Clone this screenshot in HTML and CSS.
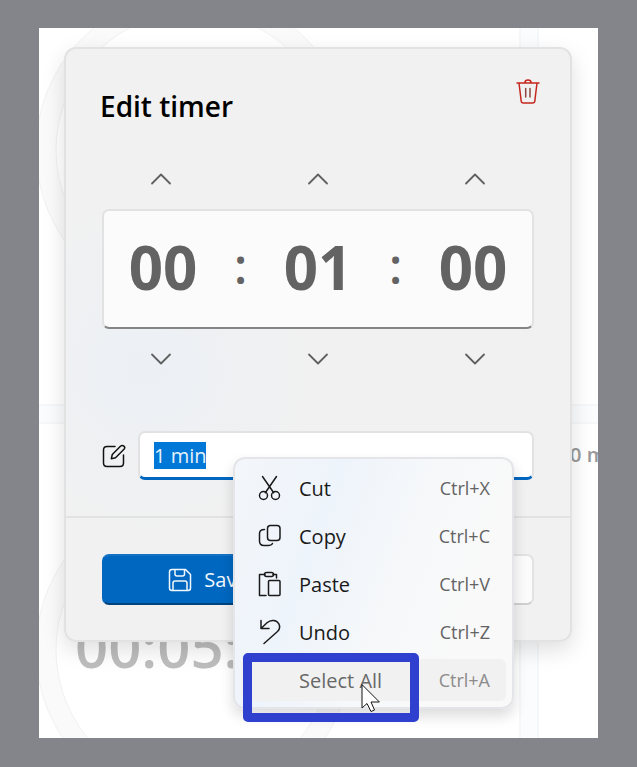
FILE: index.html
```html
<!DOCTYPE html>
<html lang="en">
<head>
<meta charset="utf-8">
<title>Edit timer</title>
<link rel="stylesheet" href="styles.css">
</head>
<body>
<main class="stage">
  <div class="backdrop" aria-hidden="true">
    <section class="tile">
      <svg class="ring" viewBox="0 0 320 320"><circle class="ring-band" cx="160" cy="160" r="148"/><circle class="ring-edge" cx="160" cy="160" r="158"/><circle class="ring-edge" cx="160" cy="160" r="138"/></svg>
    </section>
    <section class="tile"></section>
    <section class="tile tile-lower">
      <svg class="ring ring-lower" viewBox="0 0 320 320"><circle class="ring-band" cx="160" cy="160" r="148"/><circle class="ring-edge" cx="160" cy="160" r="158"/><circle class="ring-edge" cx="160" cy="160" r="138"/></svg>
      <span class="tile-time">00:05:</span>
    </section>
    <section class="tile tile-named"><span class="tile-name">0 min</span></section>
  </div>

  <form class="dialog">
    <div class="dialog-body">
      <header class="dialog-head">
        <h1 class="title">Edit timer</h1>
        <button class="icon-button delete" type="button" aria-label="Delete timer">
          <svg width="24" height="26" viewBox="0 0 24 26"><path d="M1 4H23M3 4L5.200 22Q5.400 24 7.200 24H16.800Q18.600 24 18.800 22L21 4M8.800 3.800Q9 1 12 1T15.200 3.800"/><path class="bin-bars" d="M9.700 9.500V18M14 9.500V18"/></svg>
        </button>
      </header>

      <div class="steppers">
        <button class="icon-button" type="button" aria-label="Increase hours"><svg width="22" height="14" viewBox="0 0 22 14"><path d="M2 11.500L11 2.500L20 11.500"/></svg></button>
        <button class="icon-button" type="button" aria-label="Increase minutes"><svg width="22" height="14" viewBox="0 0 22 14"><path d="M2 11.500L11 2.500L20 11.500"/></svg></button>
        <button class="icon-button" type="button" aria-label="Increase seconds"><svg width="22" height="14" viewBox="0 0 22 14"><path d="M2 11.500L11 2.500L20 11.500"/></svg></button>
      </div>
      <div class="clock">
        <input class="digits" type="text" value="00" aria-label="Hours">
        <span class="colon">:</span>
        <input class="digits" type="text" value="01" aria-label="Minutes">
        <span class="colon">:</span>
        <input class="digits" type="text" value="00" aria-label="Seconds">
      </div>
      <div class="steppers">
        <button class="icon-button" type="button" aria-label="Decrease hours"><svg width="22" height="14" viewBox="0 0 22 14"><path d="M2 2.500L11 11.500L20 2.500"/></svg></button>
        <button class="icon-button" type="button" aria-label="Decrease minutes"><svg width="22" height="14" viewBox="0 0 22 14"><path d="M2 2.500L11 11.500L20 2.500"/></svg></button>
        <button class="icon-button" type="button" aria-label="Decrease seconds"><svg width="22" height="14" viewBox="0 0 22 14"><path d="M2 2.500L11 11.500L20 2.500"/></svg></button>
      </div>

      <div class="name-row">
        <label class="name-label" for="timer-name" aria-label="Timer name">
          <svg width="24" height="24" viewBox="0 0 24 24"><path d="M13 2.500H5Q1.500 2.500 1.500 6V19Q1.500 22.500 5 22.500H18Q21.500 22.500 21.500 19V11"/><path d="M9.300 14.700L10.300 10.500L18.700 2Q20.300 .8 21.900 2.100T22 5.300L13.500 13.700Z"/></svg>
        </label>
        <input class="name-input" id="timer-name" type="text" value="1 min">
      </div>
    </div>

    <footer class="dialog-foot">
      <button class="action save" type="submit">
        <svg width="24" height="24" viewBox="0 0 24 24"><path d="M4 1.500H17.500L22.500 6.500V20Q22.500 22.500 20 22.500H4Q1.500 22.500 1.500 20V4Q1.500 1.500 4 1.500ZM7 1.500V6Q7 8 9 8H14.500Q16.500 8 16.500 6V1.500M5 22.500V15Q5 13 7 13H17Q19 13 19 15V22.500"/></svg>
        Save
      </button>
      <button class="action cancel" type="button" aria-label="Cancel"></button>
    </footer>

    <div class="menu" role="menu">
      <button class="item" type="button" role="menuitem">
        <svg width="24" height="26" viewBox="0 0 24 26"><path d="M4.500 1.500L15.700 17.700M18.500 1.500L7.300 17.700"/><circle cx="5.500" cy="20.500" r="4"/><circle cx="17.500" cy="20.500" r="4"/></svg>
        <span>Cut</span><kbd>Ctrl+X</kbd>
      </button>
      <button class="item" type="button" role="menuitem">
        <svg width="24" height="26" viewBox="0 0 24 26"><rect x="9.500" y="2.500" width="12.500" height="15" rx="3"/><path d="M6.500 6.500Q1.500 6.500 1.500 10.500V18Q1.500 22.500 6 22.500H10Q13.500 22.500 14.500 20.500"/></svg>
        <span>Copy</span><kbd>Ctrl+C</kbd>
      </button>
      <button class="item" type="button" role="menuitem">
        <svg width="24" height="26" viewBox="0 0 24 26"><path d="M7 3.500H1.500V24.500H8M15 3.500H18.500V7"/><rect x="6.500" y="1.500" width="9" height="4" rx="2"/><rect x="10.500" y="9.500" width="11.500" height="15" rx="1"/></svg>
        <span>Paste</span><kbd>Ctrl+V</kbd>
      </button>
      <button class="item" type="button" role="menuitem">
        <svg width="24" height="26" viewBox="0 0 24 26"><path d="M3 1.500V9.500H11M3 9.500L9 3.800C13 .2 18.500 1 20.700 4.700C22.500 8 21.300 10.800 19.500 12.500L6 24.500"/></svg>
        <span>Undo</span><kbd>Ctrl+Z</kbd>
      </button>
      <button class="item active" type="button" role="menuitem">
        <span class="no-icon"></span>
        <span>Select All</span><kbd>Ctrl+A</kbd>
      </button>
      <div class="marker"></div>
      <svg class="pointer" width="20" height="30" viewBox="0 0 20 30"><path d="M1 1V24L6 19.500L10 27.500L13.500 26L10 18H18Z"/></svg>
    </div>
  </form>
</main>
<script src="script.js"></script>
</body>
</html>
```
FILE: styles.css
```css
* {
  box-sizing: border-box;
}

body {
  margin: 0;
  min-height: 100vh;
  display: grid;
  padding: 28px 39px 29px;
  background: #84858a;
  color: #1a1a1a;
  font-family: "Open Sans", "Noto Sans", sans-serif;
}

button,
input,
kbd {
  font: inherit;
  color: inherit;
}

svg {
  fill: none;
  stroke: currentColor;
  stroke-width: 1.5;
  stroke-linecap: round;
  stroke-linejoin: round;
}

.stage {
  position: relative;
  overflow: hidden;
  padding: 19px 26px 96px 25px;
  background: #fff;
}

/* Timer tiles behind the dialog */
.backdrop {
  position: absolute;
  inset: 0;
  display: grid;
  grid-template-columns: 480px 1fr;
  grid-template-rows: 376px 1fr;
  gap: 20px;
  background: #fbfcfd;
}

.tile {
  overflow: hidden;
  background: #fff;
  box-shadow: 0 0 0 2px #f6f7f8;
}

.ring {
  display: block;
  width: 320px;
  height: 320px;
  margin: -38px 0 0 -5px;
}

.ring-lower {
  margin-top: 66px;
}

.ring-band {
  stroke: #fafafa;
  stroke-width: 20;
}

.ring-edge {
  stroke: #f1f1f1;
  stroke-width: 1;
}

.tile-lower,
.tile-named {
  display: grid;
  align-items: start;
}

.tile-lower > * {
  grid-area: 1 / 1;
}

.tile-time {
  margin: 182px 0 0 36px;
  font-size: 58px;
  font-weight: 600;
  line-height: 80px;
  color: #bdbdbd;
}

.tile-name {
  padding: 17px 0 0 31px;
  font-size: 20px;
  font-weight: 600;
  line-height: 28px;
  white-space: nowrap;
  color: #999;
}

/* Dialog */
.dialog {
  position: relative;
  border: 2px solid #e2e2e3;
  border-radius: 12px;
  background: radial-gradient(circle at 16% 54%, #ecf0f5 0, #f1f1f1 170px);
  box-shadow: 0 8px 22px rgba(0, 0, 0, 0.13);
}

.dialog-body {
  padding: 27px 36px 36px;
}

.dialog-head {
  display: flex;
  justify-content: space-between;
  align-items: start;
  margin: 0 -10px 0 -2px;
}

.title {
  margin: 10px 0 0;
  font-size: 28px;
  font-weight: 600;
  line-height: 40px;
  color: #000;
}

.icon-button {
  display: grid;
  place-items: center;
  width: 32px;
  height: 32px;
  padding: 0;
  border: 0;
  background: none;
  color: #606060;
}

.delete {
  color: #c4261d;
}

.bin-bars {
  stroke: #8d4541;
}

.steppers {
  display: grid;
  grid-template-columns: 118px 118px 118px;
  justify-content: space-between;
  justify-items: center;
  padding: 14px 0;
}

.dialog-head + .steppers {
  padding-top: 37px;
}

.steppers svg {
  stroke-width: 1.8;
}

.clock {
  display: grid;
  grid-template-columns: 118px 1fr 118px 1fr 118px;
  align-items: center;
  height: 120px;
  border: 2px solid #e2e2e2;
  border-bottom-color: #858585;
  border-radius: 7px;
  background: #fbfbfb;
  color: #636363;
}

.digits {
  width: 118px;
  height: 84px;
  padding: 0 0 4px;
  border: 0;
  background: none;
  font-size: 60px;
  font-weight: 700;
  line-height: 80px;
  text-align: center;
}

.colon {
  padding-bottom: 6px;
  font-size: 48px;
  font-weight: 600;
  line-height: 64px;
  text-align: center;
}

.name-row {
  display: flex;
  align-items: center;
  gap: 12px;
  margin-top: 42px;
}

.name-label {
  display: flex;
  color: #111;
}

.name-input {
  flex: 1;
  min-width: 0;
  height: 49px;
  padding: 0 14px;
  border: 2px solid #e2e2e2;
  border-bottom: 3px solid #0067c0;
  border-radius: 7px;
  outline: 0;
  background: #fff;
  font-size: 20px;
}

.name-input::selection {
  background: #0078d7;
  color: #e6f2fb;
}

.dialog-foot {
  display: flex;
  gap: 8px;
  padding: 36px 36px 35px;
  border-top: 2px solid #e2e2e2;
}

.action {
  flex: 1;
  display: flex;
  align-items: center;
  justify-content: center;
  gap: 12px;
  height: 51px;
  padding: 0;
  border: 2px solid #e2e2e2;
  border-bottom-color: #cfcfcf;
  border-radius: 7px;
  background: #fbfbfb;
  font-size: 20px;
}

.save {
  border-color: #1472c4 #0067c0 #00437d;
  background: #0067c0;
  color: #f2f8fd;
}

/* Context menu */
.menu {
  position: absolute;
  top: 408px;
  right: 56px;
  left: 167px;
  display: grid;
  gap: 6px;
  padding: 8px 6px 6px;
  border: 2px solid #e4e5e8;
  border-radius: 12px;
  background: linear-gradient(110deg, #f3f6fa 0, #eef4fb 30%, #f6f8fa 55%, #f9f9f9 80%);
  box-shadow: 0 7px 14px rgba(0, 0, 0, 0.14);
}

.item {
  display: flex;
  align-items: center;
  height: 42px;
  padding: 0 16px 0 17px;
  border: 0;
  border-radius: 6px;
  background: none;
  font-size: 20px;
  text-align: left;
}

.item svg,
.no-icon {
  width: 24px;
  margin-right: 17px;
}

.item kbd {
  margin-left: auto;
  font-size: 18px;
  color: #636363;
}

.item.active {
  background: #f1f1f1;
  color: #686868;
}

.active kbd {
  color: #8b8b8b;
}

.marker {
  position: absolute;
  top: 194px;
  left: 8px;
  width: 176px;
  height: 69px;
  border: 9px solid #3040ce;
  border-radius: 5px;
}

.pointer {
  position: absolute;
  top: 225px;
  left: 126px;
  fill: #fff;
  stroke: #151515;
  stroke-width: 1;
}
```
FILE: script.js
```js
document.getElementById("timer-name").focus();
document.getElementById("timer-name").select();
```
